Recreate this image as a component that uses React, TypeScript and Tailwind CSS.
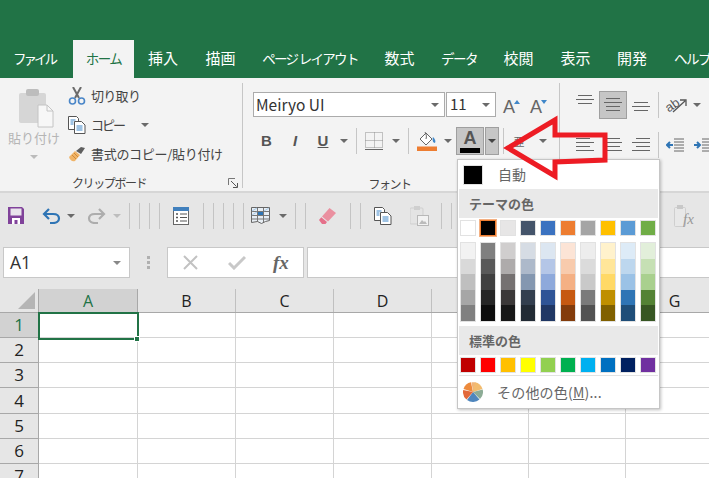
import React from "react";

const jp = "font-['Noto_Sans_CJK_JP','Noto_Sans',sans-serif]";
const Caret = ({ c = "#6a6a6a" }: { c?: string }) => (
  <svg width="8" height="4" viewBox="0 0 8 4"><path d="M0 0h8L4 4z" fill={c} /></svg>
);
const Cell = ({ w, children, cls = "" }: { w: string; children?: React.ReactNode; cls?: string }) => (
  <div className={`${w} h-full flex items-center justify-center shrink-0 ${cls}`}>{children}</div>
);
const RSep = () => <div className="w-px h-[26px] bg-[#c6c6c6] shrink-0" />;
const QSep = ({ ml }: { ml: string }) => <div className={`w-px h-[26px] bg-[#c4c4c4] shrink-0 ${ml}`} />;

const Lines = ({ rows }: { rows: [number, number][] }) => (
  <svg width="18" height="16" viewBox="0 0 18 16">
    {rows.map(([x, w], i) => (
      <rect key={i} x={x} y={1 + i * 4} width={w} height="1" fill="#666" />
    ))}
  </svg>
);

const Clip = () => (
  <svg width="36" height="40" viewBox="0 0 36 40">
    <rect x="1" y="5" width="27" height="30" rx="2" fill="#d6d6d6" />
    <rect x="8" y="1" width="13" height="7" rx="2" fill="#bdbdbd" />
    <path d="M20 17h9l6 6v16H20z" fill="#f7f7f7" stroke="#c4c4c4" />
    <path d="M29 17v6h6" fill="none" stroke="#c4c4c4" />
  </svg>
);
const Scissors = () => (
  <svg width="18" height="18" viewBox="0 0 18 18">
    <path d="M5 0l6 11M13 0L7 11" stroke="#6b6b6b" strokeWidth="2" fill="none" />
    <circle cx="4.5" cy="14" r="3" fill="none" stroke="#4a86c8" strokeWidth="1.6" />
    <circle cx="13.5" cy="14" r="3" fill="none" stroke="#4a86c8" strokeWidth="1.6" />
  </svg>
);
const CopyIco = () => (
  <svg width="18" height="18" viewBox="0 0 18 18">
    <path d="M.5.5h8l2 2v11H.5z" fill="#fff" stroke="#555" />
    <path d="M6.5 5.5h7l3.500 3.500v8.500H6.500z" fill="#fff" stroke="#555" />
    <path d="M8.500 10h6M8.500 12h6M8.500 14h6" stroke="#3f87c9" />
    <path d="M2.500 4h5M2.500 6h3M2.500 8h3" stroke="#3f87c9" />
  </svg>
);
const Brush = () => (
  <svg width="18" height="16" viewBox="0 0 18 16">
    <path d="M1 11l6-6 5 4-5 6c-3 1-5-1-6-4z" fill="#f0b468" />
    <path d="M4 9l4 4M6 7l4 4" stroke="#d08a38" />
    <path d="M8 5l5-4 4 1-4 6z" fill="#5f5f5f" />
  </svg>
);
const Launcher = () => (
  <svg width="10" height="10" viewBox="0 0 10 10">
    <path d="M.5 7V.5H7" fill="none" stroke="#777" />
    <path d="M3 3l5.500 5.500M9.500 5v4.500H5" fill="none" stroke="#555" />
  </svg>
);
const SizeA = ({ up }: { up: boolean }) => (
  <div className="relative flex items-center justify-center h-full">
    <span className="font-['Liberation_Sans'] text-[18px] text-[#666] leading-none mt-1">A</span>
    <svg width="6" height="4" viewBox="0 0 6 4" className="absolute right-[-5px] top-[8px]">
      <path d={up ? "M0 4h6L3 0z" : "M0 0h6L3 4z"} fill="#3f87c9" />
    </svg>
  </div>
);
const BorderIco = () => (
  <svg width="18" height="18" viewBox="0 0 18 18">
    <path d="M.5.500h17v15H.5zM9.500 .5v15M.5 8.500h17" fill="none" stroke="#8f8f8f" strokeDasharray="1 1" />
    <path d="M0 17.500h18" stroke="#666" />
  </svg>
);
const Fill = () => (
  <svg width="20" height="20" viewBox="0 0 20 20">
    <path d="M3 8l6-6 6 6-6 6z" fill="#fff" stroke="#666" />
    <path d="M8 1c1 2 2 4 1 7" stroke="#666" fill="none" />
    <path d="M16 6c2 2 3 4 2 6-2 0-3-3-2-6z" fill="#3f87c9" />
    <rect x="0" y="15.500" width="20" height="4.500" fill="#ed7d31" />
  </svg>
);
const Orient = () => (
  <svg width="22" height="18" viewBox="0 0 22 18">
    <text x="0" y="13" fontSize="13" fontFamily="Liberation Sans" fill="#555" transform="rotate(-35 8 9)">ab</text>
    <path d="M8 16L20 5M15 4h6v6" stroke="#555" fill="none" strokeWidth="1.300" />
  </svg>
);
const Indent = ({ rev }: { rev?: boolean }) => (
  <svg width="18" height="16" viewBox="0 0 18 16">
    {rev ? <path d="M0 8h6M3 5L6 8 3 11" stroke="#2f75b5" strokeWidth="2" fill="none" /> : <path d="M7 8H1M4 5L1 8l3 3" stroke="#2f75b5" strokeWidth="2" fill="none" />}
    <path d="M8 2h10M8 5h10M8 8h10M8 11h10M8 14h10" stroke="#666" />
  </svg>
);

const Save = () => (
  <svg width="16" height="17" viewBox="0 0 16 17">
    <path d="M0 0h14l2 2v15H0z" fill="#80429a" />
    <rect x="2.500" y="1.500" width="11" height="7" fill="#e9e4ec" />
    <path d="M4 17v-6h8v6h-2.500v-4h-3v4z" fill="#fff" />
  </svg>
);
const Undo = ({ c, flip }: { c: string; flip?: boolean }) => (
  <svg width="19" height="16" viewBox="0 0 19 16" style={flip ? { transform: "scaleX(-1)" } : undefined}>
    <path d="M2 6h9c3.500 0 6 1.500 6 4.500S14 15 11 15H8" fill="none" stroke={c} strokeWidth="2.200" />
    <path d="M7 1L2 6l5 5" fill="none" stroke={c} strokeWidth="2.200" />
  </svg>
);
const FormIco = () => (
  <svg width="16" height="18" viewBox="0 0 16 18">
    <rect x=".5" y=".5" width="15" height="17" fill="#fff" stroke="#666" />
    <rect x="0" y="0" width="16" height="4" fill="#4180bd" />
    <path d="M7 7h7M7 10.500h7M7 14h7" stroke="#555" />
    <path d="M3 7h2M3 10.500h2M3 14h2" stroke="#555" strokeWidth="1.500" />
  </svg>
);
const TableIco = () => (
  <svg width="19" height="18" viewBox="0 0 19 18">
    <path d="M.5.500h18v13l-4 1-4 2-4-2-6 1z" fill="#e8eef4" stroke="#666" />
    <path d="M.5 4.500h18M.5 8.500h18M.5 12h18M6.500 1v14M12.500 1v14" stroke="#777" />
    <rect x="7" y="5" width="5" height="3" fill="#2f75b5" />
    <path d="M1 4l5-3M13 4l5-3M1 8l5-3" stroke="#a9cbe8" />
  </svg>
);
const Eraser = () => (
  <svg width="17" height="16" viewBox="0 0 17 16">
    <path d="M10.500 0L17 5l-8 8.500L3 8.500z" fill="#ea90a0" />
    <path d="M2.300 9.300L8 14l-1.500 2H3L0 12z" fill="#e5708a" />
  </svg>
);
const PasteGray = () => (
  <svg width="19" height="20" viewBox="0 0 19 20">
    <rect x="0" y="2" width="13" height="16" rx="1" fill="#e4e4e4" stroke="#cfcfcf" />
    <rect x="4" y="0" width="6" height="4" fill="#cfcfcf" />
    <rect x="7.500" y="9.500" width="11" height="10" fill="#f2f2f2" stroke="#b8b8b8" />
    <path d="M9 18l3-4 2 2 1-1 2 3z" fill="#bbb" />
  </svg>
);
const PasteFx = () => (
  <svg width="12" height="22" viewBox="0 0 12 22">
    <rect x=".5" y="2.500" width="11" height="19" rx="1" fill="#e8e8e8" stroke="#cfcfcf" />
    <rect x="3" y="0" width="6" height="4" fill="#c8c8c8" />
  </svg>
);
const Pie = () => (
  <svg width="20" height="20" viewBox="0 0 20 20">
    <path d="M10 10L8 .2A10 10 0 0 0 .5 7z" fill="#ed8a3c" />
    <path d="M10 10L8.500 .2h3L12.500 .3 11 10z" fill="#f0b478" />
    <path d="M10 10l2-9.800A10 10 0 0 1 19.500 7z" fill="#f2bb6e" />
    <path d="M10 10l9.700-2.500A10 10 0 0 1 17 17z" fill="#8dac96" />
    <path d="M10 10l6.500 7.500A10 10 0 0 1 4 18z" fill="#4f86bd" />
    <path d="M10 10L3.500 17.500A10 10 0 0 1 .2 8z" fill="#e2683a" />
  </svg>
);
const Cross = () => (
  <svg width="15" height="15" viewBox="0 0 15 15"><path d="M1 1l13 13M14 1L1 14" stroke="#c2c2c2" strokeWidth="2" /></svg>
);
const Check = () => (
  <svg width="18" height="15" viewBox="0 0 18 15"><path d="M1 8l5 5L17 2" stroke="#c8c8c8" strokeWidth="3" fill="none" /></svg>
);

const theme = ["#ffffff", "#000000", "#e7e6e6", "#44546a", "#3b72c0", "#ed7d31", "#a5a5a5", "#ffc000", "#5b9bd5", "#70ad47"];
const tints = [
  ["#f2f2f2", "#d9d9d9", "#bfbfbf", "#a6a6a6", "#808080"],
  ["#7f7f7f", "#595959", "#404040", "#262626", "#0d0d0d"],
  ["#d0cece", "#aeabab", "#757171", "#3b3838", "#171717"],
  ["#d6dce4", "#adb9ca", "#8497b0", "#333f4f", "#222b35"],
  ["#dce6f1", "#b4c6e7", "#8ea9db", "#2f5496", "#203764"],
  ["#fce4d6", "#f8cbad", "#f4b084", "#c65911", "#833c0c"],
  ["#ededed", "#dbdbdb", "#c9c9c9", "#7b7b7b", "#525252"],
  ["#fff2cc", "#ffe699", "#ffd966", "#bf8f00", "#806000"],
  ["#ddebf7", "#bdd7ee", "#9bc2e6", "#2f75b5", "#1f4e78"],
  ["#e2efda", "#c6e0b4", "#a9d08e", "#548235", "#375623"],
];
const standard = ["#c00000", "#ff0000", "#ffc000", "#ffff00", "#92d050", "#00b050", "#00b0f0", "#0070c0", "#002060", "#7030a0"];
const kana3 = "text-[13.500px] tracking-[-1.500px]";
const kanji = "text-[15px]";
const tabs: [string, string, string][] = [
  ["ファイル", "w-[73px] pr-[5px]", "text-[13.500px] tracking-[-3px]"], ["ホーム", "w-[61px]", kana3], ["挿入", "w-[58px]", kanji], ["描画", "w-[57px]", kanji],
  ["ページ レイアウト", "w-[122px]", "text-[13.500px] tracking-[-1.700px]"],
  ["数式", "w-[57px]", kanji], ["データ", "w-[62px]", kana3], ["校閲", "w-[57px]", kanji], ["表示", "w-[57px]", kanji], ["開発", "w-[56px]", kanji], ["ヘルプ", "w-[64px]", kana3],
];
const cols: [string, string][] = [["B", "w-[98px]"], ["C", "w-[98px]"], ["D", "w-[98px]"], ["E", "w-[97px]"], ["F", "w-[97px]"], ["G", "w-[98px]"]];
const rows: [string, string][] = [["2", "h-[25px]"], ["3", "h-[25px]"], ["4", "h-[26px]"], ["5", "h-[25px]"], ["6", "h-[25px]"], ["7", "h-[25px]"]];

const Swatch = ({ c, selected }: { c: string; selected?: boolean }) => (
  <div className={`w-[16px] h-[16px] border ${selected ? "border-[#ed7d31] outline outline-[1px] outline-[#f4b183]" : "border-[#e2e2e2]"}`} style={{ background: c }} />
);

export default function App() {
  return (
    <div className={`relative w-[709px] h-[478px] overflow-hidden bg-white ${jp}`}>
      <div className="h-[78px] bg-[#217346] flex items-end">
        {tabs.map(([t, w, f], i) => (
          <div key={t} className={`${w} shrink-0 h-[38px] flex items-center justify-center whitespace-nowrap pb-px ${i === 1 ? "bg-[#f3f3f3] text-[#217346]" : "text-white"}`}>
            <span className={f}>{t}</span>
          </div>
        ))}
      </div>

      <div className="h-[115px] bg-[#f3f3f3] border-b-2 border-[#d6d6d6] flex text-[#444]">
        {/* clipboard */}
        <div className="w-[243px] shrink-0 mt-[5px] mb-[3px] border-r border-[#c6c6c6] flex flex-col">
          <div className="flex h-[89px]">
            <div className="w-[68px] shrink-0 flex flex-col items-center pt-[5px] pl-[3px]">
              <Clip />
              <div className="text-[13px] text-[#b5b5b5] whitespace-nowrap mt-[1px] -ml-[3px] leading-[18px]">貼り付け</div>
              <div className="mt-[8px] -ml-[3px]"><Caret c="#bbb" /></div>
            </div>
            <div className="flex flex-col text-[13px] whitespace-nowrap -mt-[1px]">
              <div className="h-[28px] flex items-center gap-[5px]"><Scissors /><span className="tracking-[-0.700px]">切り取り</span></div>
              <div className="h-[29px] flex items-center gap-[5px]"><CopyIco /><span className="tracking-[-2px]">コピー</span><span className="ml-[12px]"><Caret /></span></div>
              <div className="h-[29px] flex items-center gap-[5px]"><Brush /><span className="tracking-[-0.300px]">書式のコピー/貼り付け</span></div>
            </div>
          </div>
          <div className="flex-1 flex items-center pl-[72px] pr-[4px] pt-[6px] justify-between text-[12px]">
            <span className="tracking-[-1.400px]">クリップボード</span><Launcher />
          </div>
        </div>

        {/* font */}
        <div className="w-[317px] shrink-0 mt-[5px] mb-[3px] border-r border-[#c6c6c6] flex flex-col pl-[10px]">
          <div className="flex items-center h-[28px] mt-[9px]">
            <div className="w-[192px] h-full bg-white border border-[#ababab] flex items-center justify-between pl-[2px] pr-[5px] text-[15.500px] text-[#333]">
              <span>Meiryo UI</span><Caret />
            </div>
            <div className="w-[50px] ml-px h-full bg-white border border-[#ababab] flex items-center justify-between pl-[3px] pr-[5px] text-[15px] text-[#333]">
              <span>11</span><Caret />
            </div>
            <Cell w="w-[26px]"><SizeA up /></Cell>
            <Cell w="w-[28px]"><SizeA up={false} /></Cell>
          </div>
          <div className="flex items-center h-[29px] mt-[10px] font-['Liberation_Sans',sans-serif]">
            <Cell w="w-[27px]" cls="font-bold text-[15px] text-[#555]">B</Cell>
            <Cell w="w-[30px]" cls="font-bold italic text-[15px] text-[#555]">I</Cell>
            <Cell w="w-[26px]" cls="font-bold text-[15px] text-[#555] underline">U</Cell>
            <Cell w="w-[16px]"><Caret /></Cell>
            <Cell w="w-[4px]" />
            <RSep />
            <Cell w="w-[34px]"><BorderIco /></Cell>
            <Cell w="w-[10px]"><Caret /></Cell>
            <Cell w="w-[7px]" />
            <RSep />
            <Cell w="w-[35px]"><Fill /></Cell>
            <Cell w="w-[8px]"><Caret /></Cell>
            <Cell w="w-[4px]" />
            <div className="w-[28px] h-[28px] bg-[#c6c6c6] border border-[#9f9f9f] flex flex-col items-center shrink-0">
              <span className="font-bold text-[18px] leading-[19px] text-[#555] mt-[1px]">A</span>
              <div className="w-[20px] h-[5px] bg-black" />
            </div>
            <div className="w-[14px] h-[28px] bg-[#c6c6c6] border border-[#9f9f9f] flex items-center justify-center ml-px shrink-0"><Caret c="#444" /></div>
            <Cell w="w-[4px]" />
            <RSep />
            <Cell w="w-[30px]" cls="text-[11px] text-[#666]"><span className={jp}>亜</span></Cell>
            <Cell w="w-[18px]"><Caret /></Cell>
          </div>
          <div className="flex-1 flex items-center justify-center pr-[33px] pt-[20px] text-[12px] tracking-[-1.500px]">フォント</div>
        </div>

        {/* alignment */}
        <div className="flex-1 flex flex-col pl-[10px] my-[5px]">
          <div className="flex items-center h-[28px] mt-[8px]">
            <Cell w="w-[29px]" cls="pb-[6px]"><Lines rows={[[2, 14], [0, 18], [2, 14]]} /></Cell>
            <Cell w="w-[28px]" cls="bg-[#c6c6c6] border border-[#9f9f9f]"><Lines rows={[[2, 14], [0, 18], [2, 14], [2, 14]]} /></Cell>
            <Cell w="w-[27px]" cls="pt-2"><Lines rows={[[2, 14], [0, 18], [2, 14]]} /></Cell>
            <Cell w="w-[4px]" />
            <RSep />
            <Cell w="w-[34px]"><Orient /></Cell>
            <Cell w="w-[8px]"><Caret /></Cell>
          </div>
          <div className="flex items-center h-[29px] mt-[11px]">
            <Cell w="w-[29px]"><Lines rows={[[0, 14], [0, 18], [0, 14], [0, 18]]} /></Cell>
            <Cell w="w-[28px]"><Lines rows={[[2, 14], [0, 18], [2, 14], [0, 18]]} /></Cell>
            <Cell w="w-[27px]"><Lines rows={[[4, 14], [0, 18], [4, 14], [0, 18]]} /></Cell>
            <Cell w="w-[4px]" />
            <RSep />
            <Cell w="w-[32px]"><Indent /></Cell>
            <Cell w="w-[24px]"><Indent rev /></Cell>
          </div>
        </div>
      </div>

      {/* quick access */}
      <div className="h-[50px] bg-[#e6e6e6] flex items-center pb-[5px] pl-[8px]">
        <Save />
        <div className="ml-[18px]"><Undo c="#2f75b5" /></div>
        <div className="ml-[6px]"><Caret /></div>
        <div className="ml-[12px]"><Undo c="#adadad" flip /></div>
        <div className="ml-[7px]"><Caret c="#bdbdbd" /></div>
        <QSep ml="ml-[8px]" /><QSep ml="ml-[9px]" /><QSep ml="ml-[9px]" /><QSep ml="ml-[9px]" />
        <div className="ml-[13px]"><FormIco /></div>
        <QSep ml="ml-[14px]" /><QSep ml="ml-[9px]" /><QSep ml="ml-[9px]" /><QSep ml="ml-[9px]" /><QSep ml="ml-[9px]" />
        <div className="ml-[7px]"><TableIco /></div>
        <div className="ml-[9px]"><Caret /></div>
        <QSep ml="ml-[8px]" /><QSep ml="ml-[9px]" />
        <div className="ml-[13px]"><Eraser /></div>
        <QSep ml="ml-[14px]" /><QSep ml="ml-[9px]" />
        <div className="ml-[13px]"><CopyIco /></div>
        <div className="ml-[18px]"><PasteGray /></div>
        <QSep ml="ml-[12px]" /><QSep ml="ml-[9px]" />
        <div className="ml-[222px] flex items-end">
          <PasteFx />
          <span className="-ml-[3px] text-[15px] italic text-[#999] font-['Liberation_Serif',serif] leading-[15px]">fx</span>
        </div>
      </div>

      {/* formula bar */}
      <div className="h-[46px] bg-[#e6e6e6] flex items-start pl-[3px] pt-[4px]">
        <div className="w-[127px] h-[31px] bg-white border border-[#c8c8c8] flex items-center justify-between pl-[6px] pr-[8px] font-['Open_Sans',sans-serif] text-[17.500px] text-[#333]">
          <span>A1</span><Caret c="#888" />
        </div>
        <div className="w-[37px] h-[31px] flex flex-col items-center justify-center gap-[2px] pr-[1px]">
          <div className="w-[3px] h-[3px] bg-[#b0b0b0]" /><div className="w-[3px] h-[3px] bg-[#b0b0b0]" /><div className="w-[3px] h-[3px] bg-[#b0b0b0]" />
        </div>
        <div className="w-[137px] h-[31px] bg-white border border-[#c8c8c8] flex items-center pl-[15px]">
          <Cross />
          <span className="ml-[30px]"><Check /></span>
          <span className="ml-[27px] font-['Liberation_Serif',serif] italic font-bold text-[19px] text-[#666] leading-none">fx</span>
        </div>
        <div className="flex-1 ml-[3px] h-[31px] bg-white border-y border-l border-[#c8c8c8]" />
      </div>

      {/* column headers */}
      <div className="h-[24px] bg-[#e6e6e6] border-b border-[#a8a8a8] flex font-['Open_Sans',sans-serif] text-[16px] text-[#222]">
        <div className="w-[39px] shrink-0 border-r border-[#a8a8a8] flex items-end justify-end pr-[3px] pb-[3px]">
          <svg width="17" height="17" viewBox="0 0 17 17"><path d="M17 0v17H0z" fill="#b5b5b5" /></svg>
        </div>
        <div className="w-[99px] shrink-0 bg-[#d2d2d2] border-r border-[#a8a8a8] flex items-center justify-center text-[#217346]">A</div>
        {cols.map(([c, w]) => (
          <div key={c} className={`${w} shrink-0 border-r border-[#c0c0c0] flex items-center justify-center`}>{c}</div>
        ))}
      </div>

      {/* rows */}
      <div className="font-['Open_Sans',sans-serif] text-[17px] text-[#222]">
        <div className="flex h-[25px]">
          <div className="w-[39px] shrink-0 bg-[#d2d2d2] border-r border-[#a8a8a8] border-b flex items-center justify-center text-[#217346]">1</div>
          <div className="w-[99px] shrink-0 border-r border-b border-[#d4d4d4]" />
          {cols.map(([c, w]) => <div key={c} className={`${w} shrink-0 border-r border-b border-[#d4d4d4]`} />)}
        </div>
        {rows.map(([r, h]) => (
          <div key={r} className={`flex ${h}`}>
            <div className="w-[39px] shrink-0 bg-[#e6e6e6] border-r border-b border-[#a8a8a8] flex items-center justify-center">{r}</div>
            <div className="w-[99px] shrink-0 border-r border-b border-[#d4d4d4]" />
            {cols.map(([c, w]) => <div key={c} className={`${w} shrink-0 border-r border-b border-[#d4d4d4]`} />)}
          </div>
        ))}
      </div>

      {/* selection */}
      <div className="absolute left-[38px] top-[312px] w-[101px] h-[28px] border-2 border-[#217346]" />
      <div className="absolute left-[134px] top-[336px] w-[6px] h-[6px] bg-[#217346] border border-white" />

      {/* colour popup */}
      <div className="absolute left-[457px] top-[159px] w-[203px] h-[250px] bg-white border border-[#c6c6c6] shadow-[1px_1px_3px_rgba(0,0,0,0.25)] flex flex-col">
        <div className="h-[29px] flex items-center pl-[5px] shrink-0">
          <div className="w-[20px] h-[20px] bg-black border border-[#e2e2e2]" />
          <span className="ml-[15px] text-[14px] text-[#666]">自動</span>
        </div>
        <div className="h-[29px] mx-px bg-[#e9e9e9] flex items-center pl-[10px] text-[13px] font-bold text-[#666] shrink-0">テーマの色</div>
        <div className="flex gap-[4px] pl-[2px] mt-[2px] shrink-0">
          {theme.map((c, i) => <Swatch key={c} c={c} selected={i === 1} />)}
        </div>
        <div className="flex gap-[4px] pl-[2px] mt-[6px] shrink-0">
          {tints.map((col, i) => (
            <div key={i} className="w-[16px] h-[80px] border border-[#e2e2e2] flex flex-col">
              {col.map((c) => <div key={c} className="flex-1" style={{ background: c }} />)}
            </div>
          ))}
        </div>
        <div className="h-[29px] mx-px mt-[4px] bg-[#e9e9e9] flex items-center pl-[10px] text-[13px] font-bold text-[#666] shrink-0">標準の色</div>
        <div className="flex gap-[4px] pl-[2px] mt-[2px] shrink-0">
          {standard.map((c) => <Swatch key={c} c={c} />)}
        </div>
        <div className="mx-px mt-[2px] border-t border-[#e2e2e2] flex-1 flex items-center pl-[4px]">
          <Pie />
          <span className="ml-[14px] text-[14px] text-[#666] tracking-[0.200px]">その他の色(<span className="underline">M</span>)...</span>
        </div>
      </div>

      {/* annotation arrow */}
      <svg className="absolute left-0 top-0 pointer-events-none" width="709" height="478" viewBox="0 0 709 478">
        <polygon points="508,148 555,120 555,135 605,135 605,160 555,162 555,176" fill="none" stroke="#ed1c24" strokeWidth="5" strokeLinejoin="miter" />
      </svg>
    </div>
  );
}
